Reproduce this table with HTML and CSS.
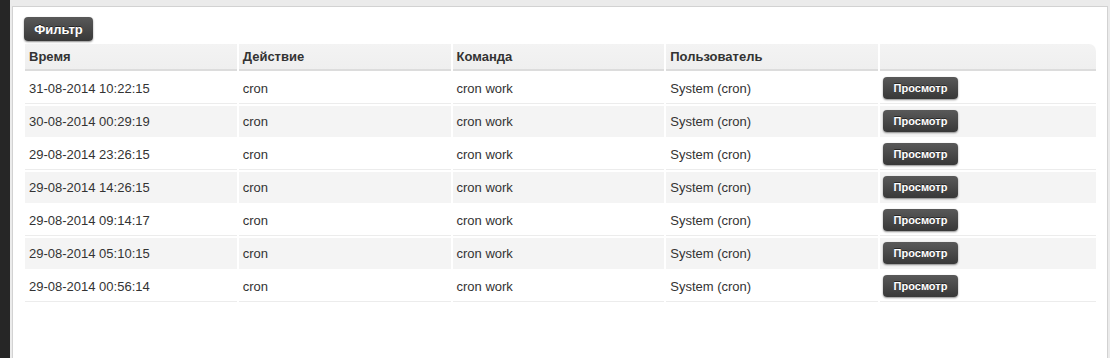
FILE: index.html
```html
<!DOCTYPE html>
<html lang="ru">
<head>
<meta charset="utf-8">
<title>Журнал</title>
<link rel="stylesheet" href="styles.css">
</head>
<body>
<div class="page">
  <div class="sidebar"></div>
  <div class="panel">
    <button class="btn btn-filter">Фильтр</button>
    <table class="log">
      <thead>
        <tr>
          <th class="col">Время</th>
          <th class="col">Действие</th>
          <th class="col">Команда</th>
          <th class="col">Пользователь</th>
          <th class="last"></th>
        </tr>
      </thead>
      <tbody>
        <tr><td>31-08-2014 10:22:15</td><td>cron</td><td>cron work</td><td>System (cron)</td><td><button class="btn btn-view">Просмотр</button></td></tr>
        <tr><td>30-08-2014 00:29:19</td><td>cron</td><td>cron work</td><td>System (cron)</td><td><button class="btn btn-view">Просмотр</button></td></tr>
        <tr><td>29-08-2014 23:26:15</td><td>cron</td><td>cron work</td><td>System (cron)</td><td><button class="btn btn-view">Просмотр</button></td></tr>
        <tr><td>29-08-2014 14:26:15</td><td>cron</td><td>cron work</td><td>System (cron)</td><td><button class="btn btn-view">Просмотр</button></td></tr>
        <tr><td>29-08-2014 09:14:17</td><td>cron</td><td>cron work</td><td>System (cron)</td><td><button class="btn btn-view">Просмотр</button></td></tr>
        <tr><td>29-08-2014 05:10:15</td><td>cron</td><td>cron work</td><td>System (cron)</td><td><button class="btn btn-view">Просмотр</button></td></tr>
        <tr><td>29-08-2014 00:56:14</td><td>cron</td><td>cron work</td><td>System (cron)</td><td><button class="btn btn-view">Просмотр</button></td></tr>
      </tbody>
    </table>
  </div>
</div>
</body>
</html>
```
FILE: styles.css
```css
html, body {
  margin: 0;
  padding: 0;
  height: 100%;
}
body {
  background: #ebebeb;
  font-family: "Liberation Sans", Arial, sans-serif;
  font-size: 13px;
  color: #333;
}
.page {
  display: flex;
  height: 100%;
}
.sidebar {
  width: 10px;
  flex: none;
  background: #262626;
}
.panel {
  flex: 1;
  margin: 6px 2px 0 2px;
  background: #fff;
  border: 1px solid #d2d2d2;
  border-bottom: none;
  padding: 10px 9px 0 11px;
}
.btn {
  display: block;
  border: none;
  color: #fff;
  font-family: "Liberation Sans", Arial, sans-serif;
  font-weight: bold;
  background: linear-gradient(#595959, #383838);
  border-radius: 4px;
  box-shadow: 0 1px 2px rgba(0,0,0,0.45);
  text-shadow: 0 -1px 0 rgba(0,0,0,0.5);
  cursor: pointer;
}
.btn-filter {
  width: 69px;
  height: 24px;
  font-size: 13px;
  padding: 0;
}
.btn-view {
  width: 75px;
  height: 22px;
  font-size: 11px;
  padding: 0;
  margin-left: 3px;
}
.log {
  margin-top: 1px;
  margin-left: -1px;
  width: calc(100% + 1px);
  border-collapse: separate;
  border-spacing: 2px;
}
.log th {
  text-align: left;
  font-weight: bold;
  font-size: 13px;
  background: linear-gradient(#f3f3f3, #efefef);
  border-bottom: 2px solid #dcdcdc;
  height: 25px;
  padding: 0 4px;
}
.log th.col {
  width: 203.75px;
}
.log th.last {
  border-top-right-radius: 7px;
}
.log td {
  height: 30px;
  padding: 0 4px;
  border-bottom: 1px solid #ececec;
  vertical-align: middle;
}
.log td:last-child {
  padding: 0;
}
.log tbody tr:nth-child(even) td {
  background: #f4f4f4;
  border-bottom-color: #f4f4f4;
}
```
